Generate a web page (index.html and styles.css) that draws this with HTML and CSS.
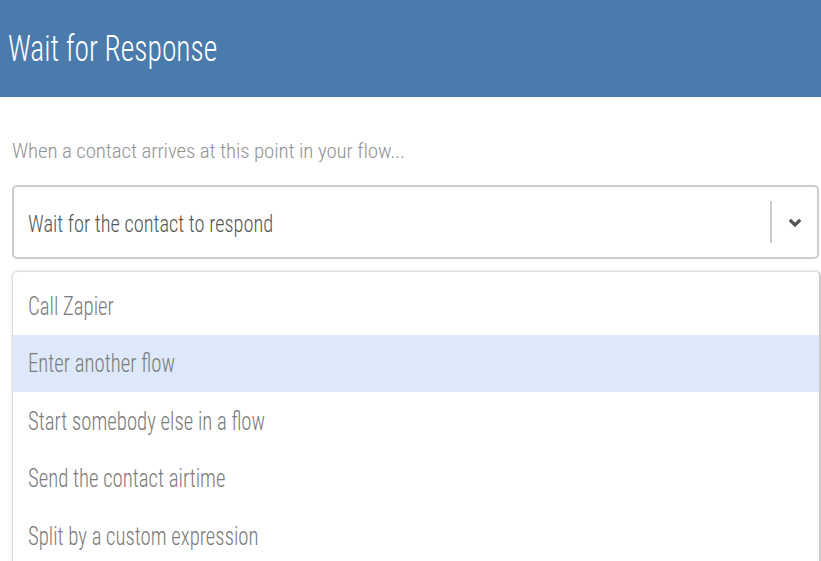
FILE: index.html
```html
<!DOCTYPE html>
<html>
<head>
<meta charset="utf-8">
<link rel="stylesheet" href="styles.css">
</head>
<body>
<header class="header"><h1 class="title"><span class="sq">Wait for Response</span></h1></header>
<main class="content">
  <p class="label">When a contact arrives at this point in your flow...</p>
  <div class="select">
    <span class="select-value"><span class="sq">Wait for the contact to respond</span></span>
    <span class="sep"></span>
    <span class="arrow"><svg width="14" height="10" viewBox="0 0 14 10"><path d="M1.8 1.8 L7 7 L12.2 1.8" fill="none" stroke="#555" stroke-width="3.2"/></svg></span>
  </div>
  <ul class="menu">
    <li class="item"><span class="sq">Call Zapier</span></li>
    <li class="item active"><span class="sq">Enter another flow</span></li>
    <li class="item"><span class="sq">Start somebody else in a flow</span></li>
    <li class="item"><span class="sq">Send the contact airtime</span></li>
    <li class="item"><span class="sq">Split by a custom expression</span></li>
  </ul>
</main>
</body>
</html>
```
FILE: styles.css
```css
* { box-sizing: border-box; }
html, body { margin: 0; padding: 0; background: #fff; overflow: hidden; }
body { font-family: "Roboto Condensed", Roboto, "Liberation Sans", sans-serif; font-weight: 300; width: 821px; height: 561px; }
.sq { display: inline-block; transform-origin: left center; white-space: nowrap; }
.header { height: 97px; background: #4a7bac; display: flex; align-items: center; padding-left: 8px; }
.title { margin: 0; font-weight: 300; font-size: 36px; color: #fff; }
.title .sq { transform: scaleX(0.82); }
.content { padding: 0 0 0 12px; }
.label { margin: 42px 0 0 0; font-size: 21px; color: #939393; line-height: 24px; letter-spacing: -0.15px; }
.select { margin-top: 22px; height: 74px; width: 807px; border: 2px solid #ccc; border-radius: 5px; display: flex; align-items: center; padding-left: 14px; }
.select-value { flex: 1; font-size: 24px; color: #555; padding-top: 3px; }
.select-value .sq { transform: scaleX(0.85); }
.sep { width: 2px; height: 42px; background: #ccc; margin-right: 1px; }
.arrow { width: 44px; display: flex; justify-content: center; padding-top: 2px; }
.menu { list-style: none; margin: 12px 0 0 0; padding: 5px 0 0 0; border: 1px solid #ddd; border-right: 2px solid #ccc; border-radius: 5px 5px 0 0; box-shadow: 0 0 3px rgba(0,0,0,0.15); }
.item { height: 57.5px; display: flex; align-items: center; padding-left: 15px; padding-top: 1px; font-size: 25px; color: #7a7a7a; }
.item .sq { transform: scaleX(0.83); }
.item.active { background: #dde9fb; }
```
